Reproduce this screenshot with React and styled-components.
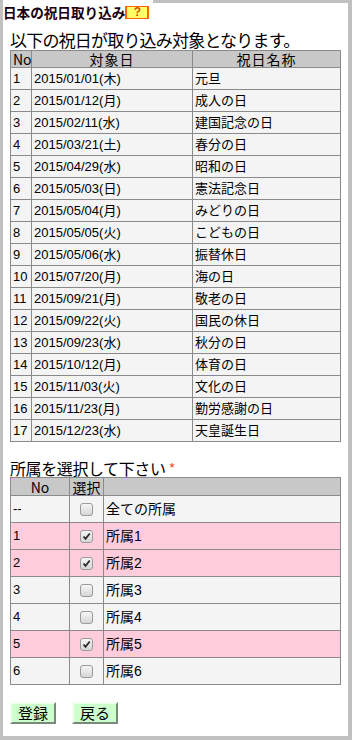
import React from "react";
import styled, { createGlobalStyle } from "styled-components";

const Global = createGlobalStyle`
  html, body { margin: 0; padding: 0; }
  body {
    background: #c0c0c0;
    padding: 3px 4px 4px 3px;
    box-sizing: border-box;
    height: 740px;
    font-family: "Liberation Sans", "Noto Sans CJK JP", sans-serif;
    color: #000;
  }
  #root { height: 100%; }
`;

const Page = styled.div`
  background: #fff;
  height: 733px;
  box-sizing: border-box;
  padding: 0 8px 0 7px;
  display: flex;
  flex-direction: column;
`;

const TitleBar = styled.div`
  align-self: flex-start;
  margin: -3px 0 0 -7px;
  padding: 4px 4px 1px 0;
  background: #fff;
  display: flex;
  align-items: center;
`;

const TitleText = styled.span`
  font-family: "Noto Sans CJK JP", sans-serif;
  font-weight: bold;
  font-size: 13.6px;
  line-height: 16px;
  color: #1a0010;
`;

const HelpBadge = styled.span`
  display: inline-flex;
  align-items: center;
  justify-content: center;
  width: 20px;
  height: 11px;
  background: #ffff66;
  border: 1px solid #ff6600;
  border-left-width: 2px;
  border-right-width: 2px;
  color: #cc5500;
  font-weight: bold;
  font-size: 12px;
  line-height: 11px;
  font-family: "Liberation Sans", sans-serif;
`;

const Heading = styled.div`
  font-family: "Noto Sans CJK JP", sans-serif;
  font-size: ${(p) => p.$size || 17}px;
  letter-spacing: ${(p) => p.$spacing ?? -0.8}px;
  line-height: 18px;
  margin-top: ${(p) => p.$top || 0}px;
  margin-bottom: ${(p) => p.$bottom || 0}px;
  white-space: nowrap;
`;

const Required = styled.span`
  color: #ff3300;
  font-family: "Liberation Sans", sans-serif;
  font-size: 13px;
  vertical-align: 3px;
  margin-left: 4px;
`;

const Table = styled.table`
  border-collapse: collapse;
  width: 330px;
  table-layout: fixed;
  border: 1px solid #404040;
  font-size: 13px;
`;

const Th = styled.th`
  background: #c8c8c8;
  border: 1px solid #8a8a8a;
  font-weight: normal;
  font-family: "Noto Sans CJK JP", sans-serif;
  font-size: 14px;
  letter-spacing: ${(p) => p.$spacing || 0}px;
  text-align: ${(p) => p.$align || "center"};
  padding: 0 2px;
  height: ${(p) => p.$h || 16}px;
  line-height: 14px;
`;

const Tr = styled.tr`
  background: ${(p) => (p.$on ? "#ffccdb" : "#f4f4f4")};
`;

const Td = styled.td`
  border: 1px solid #8a8a8a;
  padding: 0 2px;
  height: ${(p) => p.$h || 21}px;
  text-align: ${(p) => p.$align || "left"};
  font-size: ${(p) => p.$fs || 13}px;
  line-height: 14px;
  white-space: nowrap;
  overflow: hidden;
`;

const Check = styled.span`
  display: inline-block;
  vertical-align: middle;
  width: 11px;
  height: 11px;
  border: 1px solid #9a9a9a;
  border-radius: 3px;
  background: linear-gradient(#f6f6f6, #d6d6d6);
  position: relative;
  svg { position: absolute; left: 1px; top: 1px; }
`;

const ButtonRow = styled.div`
  display: flex;
  gap: 16px;
  margin-top: 17px;
`;

const Button = styled.button`
  background: #ccffcc;
  font-family: "Noto Sans CJK JP", sans-serif;
  font-size: 15px;
  line-height: 18px;
  height: 22px;
  padding: 0 6px;
  border: 2px solid;
  border-color: #f0fff0 #7a8a7a #7a8a7a #f0fff0;
  color: #000;
`;

const holidays = [
  ["2015/01/01(木)", "元旦"],
  ["2015/01/12(月)", "成人の日"],
  ["2015/02/11(水)", "建国記念の日"],
  ["2015/03/21(土)", "春分の日"],
  ["2015/04/29(水)", "昭和の日"],
  ["2015/05/03(日)", "憲法記念日"],
  ["2015/05/04(月)", "みどりの日"],
  ["2015/05/05(火)", "こどもの日"],
  ["2015/05/06(水)", "振替休日"],
  ["2015/07/20(月)", "海の日"],
  ["2015/09/21(月)", "敬老の日"],
  ["2015/09/22(火)", "国民の休日"],
  ["2015/09/23(水)", "秋分の日"],
  ["2015/10/12(月)", "体育の日"],
  ["2015/11/03(火)", "文化の日"],
  ["2015/11/23(月)", "勤労感謝の日"],
  ["2015/12/23(水)", "天皇誕生日"],
];

const depts = [
  ["--", "全ての所属", false],
  ["1", "所属1", true],
  ["2", "所属2", true],
  ["3", "所属3", false],
  ["4", "所属4", false],
  ["5", "所属5", true],
  ["6", "所属6", false],
];

function CheckBox({ checked }) {
  return (
    <Check>
      {checked && (
        <svg width="9" height="9" viewBox="0 0 9 9">
          <path d="M1.5 4.5 L3.5 6.8 L7.8 1.5" fill="none" stroke="#2a2a2a" strokeWidth="1.8" />
        </svg>
      )}
    </Check>
  );
}

export default function App() {
  return (
    <>
      <Global />
      <Page>
        <TitleBar>
          <TitleText>日本の祝日取り込み</TitleText>
          <HelpBadge>?</HelpBadge>
        </TitleBar>
        <Heading $top={10} $bottom={1}>以下の祝日が取り込み対象となります。</Heading>
        <Table>
          <colgroup>
            <col style={{ width: 21 }} />
            <col style={{ width: 161 }} />
            <col style={{ width: 148 }} />
          </colgroup>
          <thead>
            <tr>
              <Th $align="left">No</Th>
              <Th $spacing={1}>対象日</Th>
              <Th $spacing={1}>祝日名称</Th>
            </tr>
          </thead>
          <tbody>
            {holidays.map(([d, n], i) => (
              <Tr key={d}>
                <Td>{i + 1}</Td>
                <Td>{d}</Td>
                <Td>{n}</Td>
              </Tr>
            ))}
          </tbody>
        </Table>
        <Heading $top={17} $size={16} $spacing={-0.4}>
          所属を選択して下さい<Required>*</Required>
        </Heading>
        <Table>
          <colgroup>
            <col style={{ width: 59 }} />
            <col style={{ width: 34 }} />
            <col style={{ width: 237 }} />
          </colgroup>
          <thead>
            <tr>
              <Th $h={17}>No</Th>
              <Th $h={17}>選択</Th>
              <Th $h={17}></Th>
            </tr>
          </thead>
          <tbody>
            {depts.map(([no, name, on]) => (
              <Tr key={no} $on={on}>
                <Td $h={26}>{no}</Td>
                <Td $h={26} $align="center">
                  <CheckBox checked={on} />
                </Td>
                <Td $h={26} $fs={14}>{name}</Td>
              </Tr>
            ))}
          </tbody>
        </Table>
        <ButtonRow>
          <Button>登録</Button>
          <Button>戻る</Button>
        </ButtonRow>
      </Page>
    </>
  );
}
